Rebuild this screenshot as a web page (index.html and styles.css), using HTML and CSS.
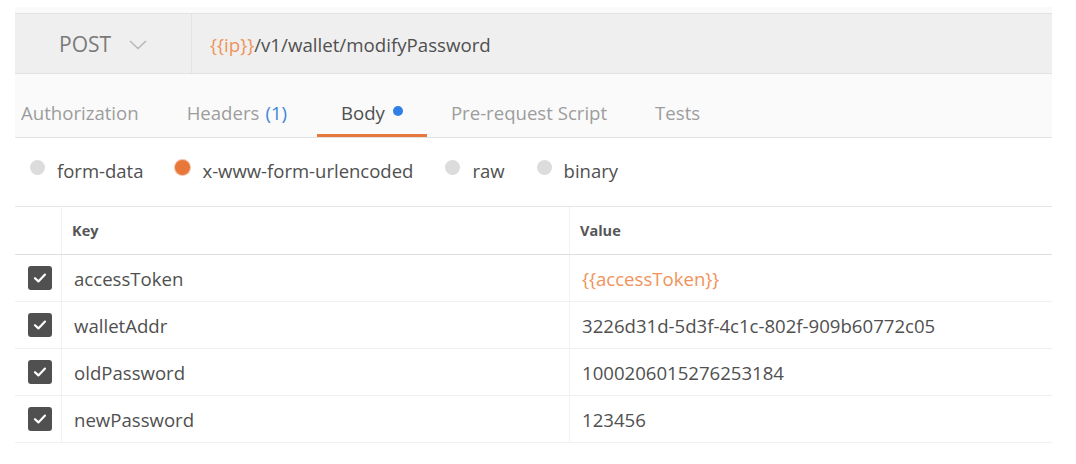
FILE: index.html
```html
<!DOCTYPE html>
<html>
<head>
<meta charset="utf-8">
<link rel="stylesheet" href="styles.css">
</head>
<body>
<div class="panel">
  <div class="urlbar">
    <div class="method">
      <span class="method-name">POST</span>
      <svg class="chev" width="18" height="10" viewBox="0 0 18 10"><path d="M1 1 L9 8.5 L17 1" fill="none" stroke="#b5b5b5" stroke-width="1.4"/></svg>
    </div>
    <div class="url"><span class="var">{{ip}}</span>/v1/wallet/modifyPassword</div>
  </div>
  <div class="tabs">
    <div class="tab">Authorization</div>
    <div class="tab tab-headers">Headers <span class="count">(1)</span></div>
    <div class="tab active">Body <span class="dot"></span></div>
    <div class="tab">Pre-request Script</div>
    <div class="tab">Tests</div>
  </div>
  <div class="modes">
    <label class="mode"><span class="radio"></span>form-data</label>
    <label class="mode"><span class="radio on"></span>x-www-form-urlencoded</label>
    <label class="mode"><span class="radio"></span>raw</label>
    <label class="mode"><span class="radio"></span>binary</label>
  </div>
  <div class="kv">
    <div class="row head">
      <div class="c-check"></div>
      <div class="c-key">Key</div>
      <div class="c-val">Value</div>
    </div>
    <div class="row">
      <div class="c-check"><span class="cb"><svg width="14" height="12" viewBox="0 0 14 12"><path d="M2 6.2 L5.4 9.4 L12 2.6" fill="none" stroke="#fff" stroke-width="2.2" stroke-linecap="round" stroke-linejoin="round"/></svg></span></div>
      <div class="c-key">accessToken</div>
      <div class="c-val var">{{accessToken}}</div>
    </div>
    <div class="row">
      <div class="c-check"><span class="cb"><svg width="14" height="12" viewBox="0 0 14 12"><path d="M2 6.2 L5.4 9.4 L12 2.6" fill="none" stroke="#fff" stroke-width="2.2" stroke-linecap="round" stroke-linejoin="round"/></svg></span></div>
      <div class="c-key">walletAddr</div>
      <div class="c-val">3226d31d-5d3f-4c1c-802f-909b60772c05</div>
    </div>
    <div class="row">
      <div class="c-check"><span class="cb"><svg width="14" height="12" viewBox="0 0 14 12"><path d="M2 6.2 L5.4 9.4 L12 2.6" fill="none" stroke="#fff" stroke-width="2.2" stroke-linecap="round" stroke-linejoin="round"/></svg></span></div>
      <div class="c-key">oldPassword</div>
      <div class="c-val">1000206015276253184</div>
    </div>
    <div class="row">
      <div class="c-check"><span class="cb"><svg width="14" height="12" viewBox="0 0 14 12"><path d="M2 6.2 L5.4 9.4 L12 2.6" fill="none" stroke="#fff" stroke-width="2.2" stroke-linecap="round" stroke-linejoin="round"/></svg></span></div>
      <div class="c-key">newPassword</div>
      <div class="c-val">123456</div>
    </div>
  </div>
</div>
</body>
</html>
```
FILE: styles.css
```css
html, body {
  margin: 0;
  padding: 0;
  background: #ffffff;
}
body {
  font-family: "Open Sans", "Noto Sans", sans-serif;
  color: #505050;
}
.panel {
  margin: 7px 0 0 15px;
  width: 1037px;
  padding-top: 6px;
  background: #fafafa;
}
.urlbar {
  display: flex;
  height: 59px;
  background: #efefef;
  border-top: 1px solid #e2e2e2;
  border-bottom: 1px solid #e2e2e2;
}
.method {
  width: 177px;
  box-sizing: border-box;
  padding-left: 44px;
  display: flex;
  align-items: center;
  gap: 18px;
  border-right: 1px solid #e3e3e3;
}
.method-name {
  font-size: 21px;
  color: #7a7a7a;
  margin-top: 1px;
}
.chev {
  margin-top: 2px;
}
.url {
  padding-left: 18px;
  display: flex;
  align-items: center;
  font-size: 18.7px;
  color: #505050;
  margin-top: 1px;
}
.var {
  color: #f0935b;
}
.tabs {
  display: flex;
  height: 63px;
  padding-left: 6px;
  border-bottom: 1px solid #e2e2e2;
}
.tab {
  padding: 14px 24px 0;
  display: flex;
  align-items: center;
  font-size: 18.6px;
  color: #9d9d9d;
  position: relative;
}
.tab:first-child {
  padding-left: 0;
}
.tab-headers {
  padding-right: 30px;
}
.tab .count {
  color: #3f86d6;
  margin-left: 6px;
}
.tab.active {
  color: #505050;
}
.tab.active::after {
  content: "";
  position: absolute;
  left: 0;
  right: 0;
  bottom: 0;
  height: 3px;
  background: #e6773d;
}
.dot {
  display: inline-block;
  width: 10px;
  height: 10px;
  border-radius: 50%;
  background: #2f7fe6;
  margin-left: 8px;
  margin-top: -3px;
}
.modes {
  display: flex;
  align-items: center;
  height: 68px;
  padding-left: 15px;
  padding-bottom: 4px;
  box-sizing: border-box;
  gap: 32px;
  background: #ffffff;
}
.mode {
  display: flex;
  align-items: center;
  font-size: 18.5px;
  color: #505050;
}
.radio {
  width: 15px;
  height: 15px;
  border-radius: 50%;
  background: #dcdcdc;
  margin-right: 12px;
  margin-top: -6px;
}
.radio.on {
  background: #e8773a;
  box-shadow: 0 0 0 1px #f3c1a5;
}
.kv {
  background: #ffffff;
  border-top: 1px solid #e6e6e6;
}
.row {
  display: flex;
  height: 46px;
  border-bottom: 1px solid #f0f0f0;
  font-size: 18.6px;
  color: #505050;
}
.row.head {
  height: 47px;
  border-bottom: 1px solid #dedede;
  font-size: 14.5px;
  font-weight: 700;
  color: #555555;
}
.c-check {
  width: 47px;
  flex: none;
  display: flex;
  align-items: center;
  padding-left: 13px;
  box-sizing: border-box;
  border-right: 1px solid #f2f2f2;
}
.c-key {
  width: 508px;
  flex: none;
  display: flex;
  align-items: center;
  padding-left: 12px;
  box-sizing: border-box;
  border-right: 1px solid #f2f2f2;
}
.c-val {
  flex: 1;
  display: flex;
  align-items: center;
  padding-left: 12px;
}
.head .c-key,
.head .c-val {
  padding-left: 10px;
}
.cb {
  width: 24px;
  height: 24px;
  border-radius: 3px;
  background: #505050;
  display: flex;
  align-items: center;
  justify-content: center;
}
```
